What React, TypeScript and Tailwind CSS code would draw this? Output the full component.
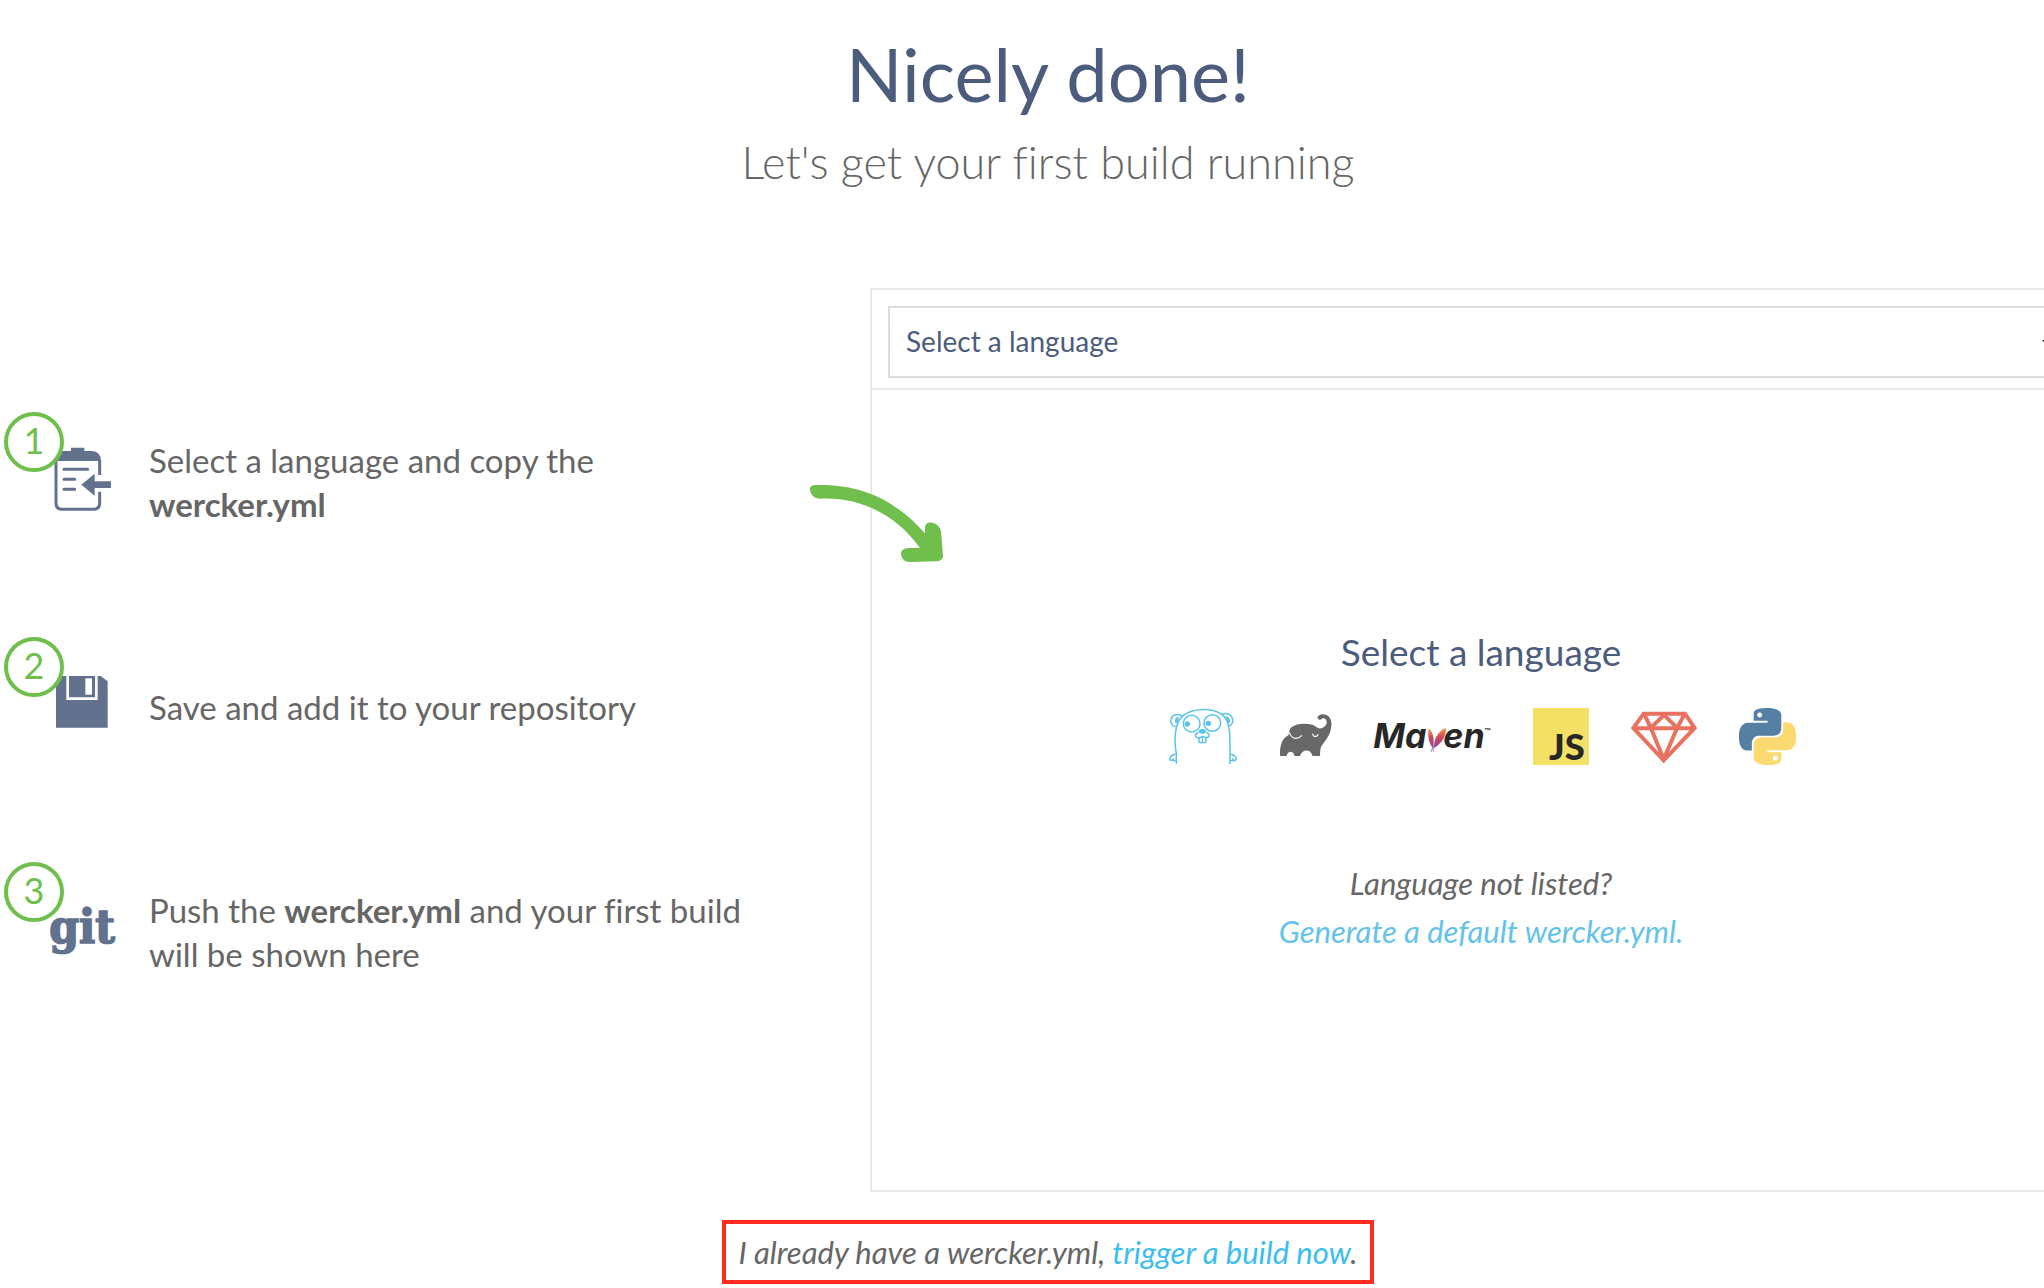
import type { ReactNode } from "react";

const ICON_INK = "#62718d";

function ClipboardIcon() {
  return (
    <svg viewBox="147 123 204 240" className="h-20 w-[68px]" aria-hidden="true">
      <path d="M164 183V177Q166 153 190 153H213V143H253V153H276Q302 154 303 183Z" fill={ICON_INK} />
      <path
        d="M299 225V180M168 178V309Q168 328 187 328H280Q299 328 299 309V275"
        fill="none"
        stroke={ICON_INK}
        strokeWidth="9"
      />
      <path d="M192 208H263M192 238H224M192 268H224" stroke={ICON_INK} strokeWidth="9" strokeLinecap="round" />
      <path d="M244 254L284 221V244H333V264H284V287Z" fill={ICON_INK} />
    </svg>
  );
}

function FloppyIcon() {
  return (
    <svg viewBox="147 138 204 240" className="h-20 w-[68px]" aria-hidden="true">
      <path d="M168 168H302L323 184V323H168Z" fill={ICON_INK} />
      <path d="M203 168V236H289V168" fill="none" stroke="#fff" strokeWidth="8" />
      <path d="M256 175H276V224H256Z" fill="#fff" />
    </svg>
  );
}

function GitIcon() {
  return (
    <svg viewBox="147 123 204 240" className="h-20 w-[68px] overflow-visible" role="img" aria-label="git">
      <text
        x="148"
        y="279"
        fontSize="142"
        fontWeight="700"
        fill={ICON_INK}
        stroke={ICON_INK}
        strokeWidth="5"
        style={{ fontFamily: '"DejaVu Serif Condensed", "DejaVu Serif", serif' }}
      >
        git
      </text>
    </svg>
  );
}

function ArrowDrawing() {
  return (
    <svg viewBox="57 642 405 237" className="h-[79px] w-[135px]" aria-hidden="true">
      <path
        d="M60 660C59 649 66 645 78 645C220 641 320 695 405 790V775C405 752 430 755 443 766C451 774 453 782 454 795L459 858C458 869 450 874 438 874L358 876C342 876 333 864 333 850C334 839 344 835 356 834H390C330 750 230 680 90 686C74 686 62 675 60 660Z"
        fill="#70bf4c"
      />
    </svg>
  );
}

function GopherLogo() {
  return (
    <svg viewBox="57 54 204 171" className="h-[57px] w-[68px]" fill="none" stroke="#5bc3ea" strokeWidth="4.5">
      <path d="M79 222V190C70 145 77 102 93 83C122 51 196 50 223 80C243 103 240 150 240 222" />
      <path d="M77 110C62 108 59 90 67 80C75 71 90 72 97 79" />
      <path d="M216 74C228 67 242 72 247 84C251 96 246 106 236 108" />
      <path d="M84 84Q76 86 77 96L80 98Z" fill="#5bc3ea" />
      <path d="M229 82Q238 84 238 95L234 97Z" fill="#5bc3ea" />
      <circle cx="125" cy="101" r="25" fill="#fff" />
      <circle cx="187" cy="99" r="25" fill="#fff" />
      <circle cx="112" cy="102" r="8" fill="#5bc3ea" stroke="none" />
      <circle cx="175" cy="100" r="8" fill="#5bc3ea" stroke="none" />
      <path d="M147 141V155Q152 161 157 156Q163 161 168 155V141M157 142V156" />
      <path d="M146 128C134 130 133 142 143 143Q150 144 157 139Q165 144 172 142C181 140 179 129 168 128" />
      <ellipse cx="157" cy="124" rx="11" ry="7" fill="#5bc3ea" stroke="none" />
      <path d="M77 193C66 193 58 202 60 209C63 215 69 208 71 205M69 212Q75 214 78 209" />
      <path d="M241 193C252 193 260 202 258 209C255 215 249 208 247 205M250 212Q243 214 241 209" />
    </svg>
  );
}

function GradleLogo() {
  return (
    <svg viewBox="389 66 160 144" className="h-12 w-[53px]">
      <path
        d="M392 195C391 165 397 143 418 132L420 120C422 110 430 104 444 100C462 97 478 98 492 102C500 106 505 112 512 112C526 111 534 101 533 92C531 80 521 79 515 85C509 89 502 81 507 75C514 67 530 67 539 76C548 85 549 100 546 112C542 135 528 150 517 165Q512 175 513 195H490C485 173 461 173 452 195H436C432 178 416 178 412 195Z"
        fill="#686868"
      />
      <path d="M420 124Q427 142 440 142Q451 141 458 133" fill="none" stroke="#fff" strokeWidth="3.5" />
      <path d="M490 128Q492 138 501 136Q506 134 507 129" fill="none" stroke="#fff" strokeWidth="3.5" />
    </svg>
  );
}

function MavenLogo() {
  return (
    <svg viewBox="678 90 351 99" className="h-[33px] w-[117px] overflow-visible">
      <defs>
        <linearGradient id="feather" x1="0" y1="0" x2="0" y2="1">
          <stop offset="0" stopColor="#f4a04a" />
          <stop offset="0.5" stopColor="#cf4258" />
          <stop offset="1" stopColor="#8a4fa8" />
        </linearGradient>
      </defs>
      <g fill="#272727" fontSize="102" fontWeight="700" fontStyle="italic" style={{ fontFamily: "Inter, sans-serif" }}>
        <text x="676" y="174">Ma</text>
        <text x="886" y="174">en</text>
      </g>
      <path d="M842 115C853 124 858 140 857 162C857 168 856 172 854 174C843 160 838 138 842 115Z" fill="url(#feather)" />
      <path d="M893 113C896 136 882 160 858 174C857 152 866 126 893 113Z" fill="url(#feather)" />
      <path d="M850 186L856 168L857 186M856 172L848 182" fill="none" stroke="#9a6bb5" strokeWidth="2" />
      <text x="1009" y="128" fontSize="21" fontWeight="700" fill="#272727" style={{ fontFamily: '"Liberation Sans", sans-serif' }}>
        ™
      </text>
    </svg>
  );
}

function JavaScriptLogo() {
  return (
    <svg viewBox="102 55 168 171" className="h-[57px] w-14 overflow-visible">
      <path d="M102 55H270V226H102Z" fill="#f4e064" />
      <text x="150" y="211" fontSize="109" fontWeight="900" fill="#272727" style={{ fontFamily: "Lato, sans-serif" }}>
        JS
      </text>
    </svg>
  );
}

function RubyLogo() {
  return (
    <svg viewBox="393 60 198 159" className="h-[53px] w-[66px]" fill="none" stroke="#e87160" strokeWidth="12">
      <path d="M431 71H555L584 114L491 211L400 114ZM400 115H584" />
      <path d="M433 73L453 115L491 208L531 115L553 73M453 113L492 75L531 113" />
    </svg>
  );
}

function PythonLogo() {
  return (
    <svg viewBox="0 0 24 24" className="size-[57px]">
      <path
        fill="#5580a3"
        d="M14.25.18l.9.2.73.26.59.3.45.32.34.34.25.34.16.33.1.3.04.26.02.2-.01.13V8.5l-.05.63-.13.55-.21.46-.26.38-.3.31-.33.25-.35.19-.35.14-.33.1-.3.07-.26.04-.21.02H8.77l-.69.05-.59.14-.5.22-.41.27-.33.32-.27.35-.2.36-.15.37-.1.35-.07.32-.04.27-.02.21v3.06H3.17l-.21-.03-.28-.07-.32-.12-.35-.18-.36-.26-.36-.36-.35-.46-.32-.59-.28-.73-.21-.88-.14-1.05-.05-1.23.06-1.22.16-1.04.24-.87.32-.71.36-.57.4-.44.42-.33.42-.24.4-.16.36-.1.32-.05.24-.01h.16l.06.01h8.16v-.83H6.18l-.01-2.75-.02-.37.05-.34.11-.31.17-.28.25-.26.31-.23.38-.2.44-.18.51-.15.58-.12.64-.1.71-.06.77-.04.84-.02 1.27.05zm-6.3 1.98l-.23.33-.08.41.08.41.23.34.33.22.41.09.41-.09.33-.22.23-.34.08-.41-.08-.41-.23-.33-.33-.22-.41-.09-.41.09z"
      />
      <path
        fill="#fcda72"
        d="M21.04 6.11l.28.06.32.12.35.18.36.27.36.35.35.47.32.59.28.73.21.88.14 1.04.05 1.23-.06 1.23-.16 1.04-.24.86-.32.71-.36.57-.4.45-.42.33-.42.24-.4.16-.36.09-.32.05-.24.02-.16-.01h-8.22v.82h5.84l.01 2.76.02.36-.05.34-.11.31-.17.29-.25.25-.31.24-.38.2-.44.17-.51.15-.58.13-.64.09-.71.07-.77.04-.84.01-1.27-.04-1.07-.14-.9-.2-.73-.25-.59-.3-.45-.33-.34-.34-.25-.34-.16-.33-.1-.3-.04-.25-.02-.2.01-.13v-5.34l.05-.64.13-.54.21-.46.26-.38.3-.32.33-.24.35-.2.35-.14.33-.1.3-.06.26-.04.21-.02.13-.01h5.84l.69-.05.59-.14.5-.21.41-.28.33-.32.27-.35.2-.36.15-.36.1-.35.07-.32.04-.28.02-.21V6.07h2.09l.14.01zm-6.47 14.25l-.23.33-.08.41.08.41.23.33.33.23.41.08.41-.08.33-.23.23-.33.08-.41-.08-.41-.23-.33-.33-.23-.41-.08-.41.08z"
      />
    </svg>
  );
}

const languages: { name: string; logo: ReactNode }[] = [
  { name: "Go", logo: <GopherLogo /> },
  { name: "Gradle", logo: <GradleLogo /> },
  { name: "Maven", logo: <MavenLogo /> },
  { name: "JavaScript", logo: <JavaScriptLogo /> },
  { name: "Ruby", logo: <RubyLogo /> },
  { name: "Python", logo: <PythonLogo /> },
];

const steps: { icon: ReactNode; text: ReactNode }[] = [
  {
    icon: <ClipboardIcon />,
    text: (
      <>
        Select a language and copy the
        <br />
        <strong className="font-bold">wercker.yml</strong>
      </>
    ),
  },
  { icon: <FloppyIcon />, text: "Save and add it to your repository" },
  {
    icon: <GitIcon />,
    text: (
      <>
        Push the <strong className="font-bold">wercker.yml</strong> and your first build
        <br />
        will be shown here
      </>
    ),
  },
];

function Steps() {
  return (
    <ol className="flex flex-col gap-[87px] pt-[124px]">
      {steps.map((step, index) => (
        <li key={index} className="relative flex h-[138px] items-center gap-8 pl-[45px] text-[33px] leading-[44px]">
          <span className="absolute top-0 left-0 flex size-[60px] items-center justify-center rounded-full border-4 border-[#70bf4c] bg-white pb-1 text-4xl text-[#70bf4c]">
            {index + 1}
          </span>
          {step.icon}
          <p className="pt-0.5">{step.text}</p>
        </li>
      ))}
    </ol>
  );
}

function LanguagePanel() {
  return (
    <section className="relative flex h-[904px] flex-col border-2 border-[#e5eae9]">
      <div className="relative border-b-2 border-[#e5eae9] px-4 pt-4 pb-2.5">
        <select
          aria-label="Select a language"
          defaultValue=""
          className="block h-[72px] w-full appearance-none border-2 border-[#d9dddc] bg-white px-4 pb-0.5 text-[28px] text-[#4b5c7c]"
        >
          <option value="">Select a language</option>
          {languages.map((language) => (
            <option key={language.name}>{language.name}</option>
          ))}
        </select>
        <svg viewBox="0 0 16 8" className="pointer-events-none absolute top-[50px] right-8 h-2 w-4" aria-hidden="true">
          <path d="M0 0H16L8 8Z" fill="#000" />
        </svg>
      </div>
      <div className="absolute top-[194px] -left-[63px]">
        <ArrowDrawing />
      </div>
      <div className="flex flex-col items-center pt-[238px]">
        <h2 className="text-[37px] leading-[48px] text-[#4b5c7c]">Select a language</h2>
        <div className="mt-8 flex items-center gap-[42px] pl-0.5">
          {languages.map((language) => (
            <button key={language.name} type="button" aria-label={language.name} className="shrink-0">
              {language.logo}
            </button>
          ))}
        </div>
        <p className="mt-[94px] text-center text-[31px] leading-[48px] italic">
          Language not listed?
          <br />
          <a href="#default" className="text-[#63c3ea]">
            Generate a default wercker.yml.
          </a>
        </p>
      </div>
    </section>
  );
}

export default function App() {
  return (
    <div className="overflow-hidden bg-white font-[Lato,sans-serif] text-[#666666] [font-variant-ligatures:none]">
      <main className="-mr-12 ml-1 flex flex-col pb-1.5">
        <header className="pt-[30px] text-center">
          <h1 className="text-[74px] leading-[88px] text-[#4b5c7c]">Nicely done!</h1>
          <p className="mt-4 text-[45px] leading-[56px] font-light">Let's get your first build running</p>
        </header>
        <div className="mt-[98px] grid grid-cols-[866fr_1222fr]">
          <Steps />
          <LanguagePanel />
        </div>
        <p className="mt-7 self-center border-4 border-[#fe2b1e] px-3 py-2 text-[31px] leading-[40px] italic">
          I already have a wercker.yml,{" "}
          <a href="#build" className="text-[#3bbdf0]">
            trigger a build now
          </a>
          .
        </p>
      </main>
    </div>
  );
}
